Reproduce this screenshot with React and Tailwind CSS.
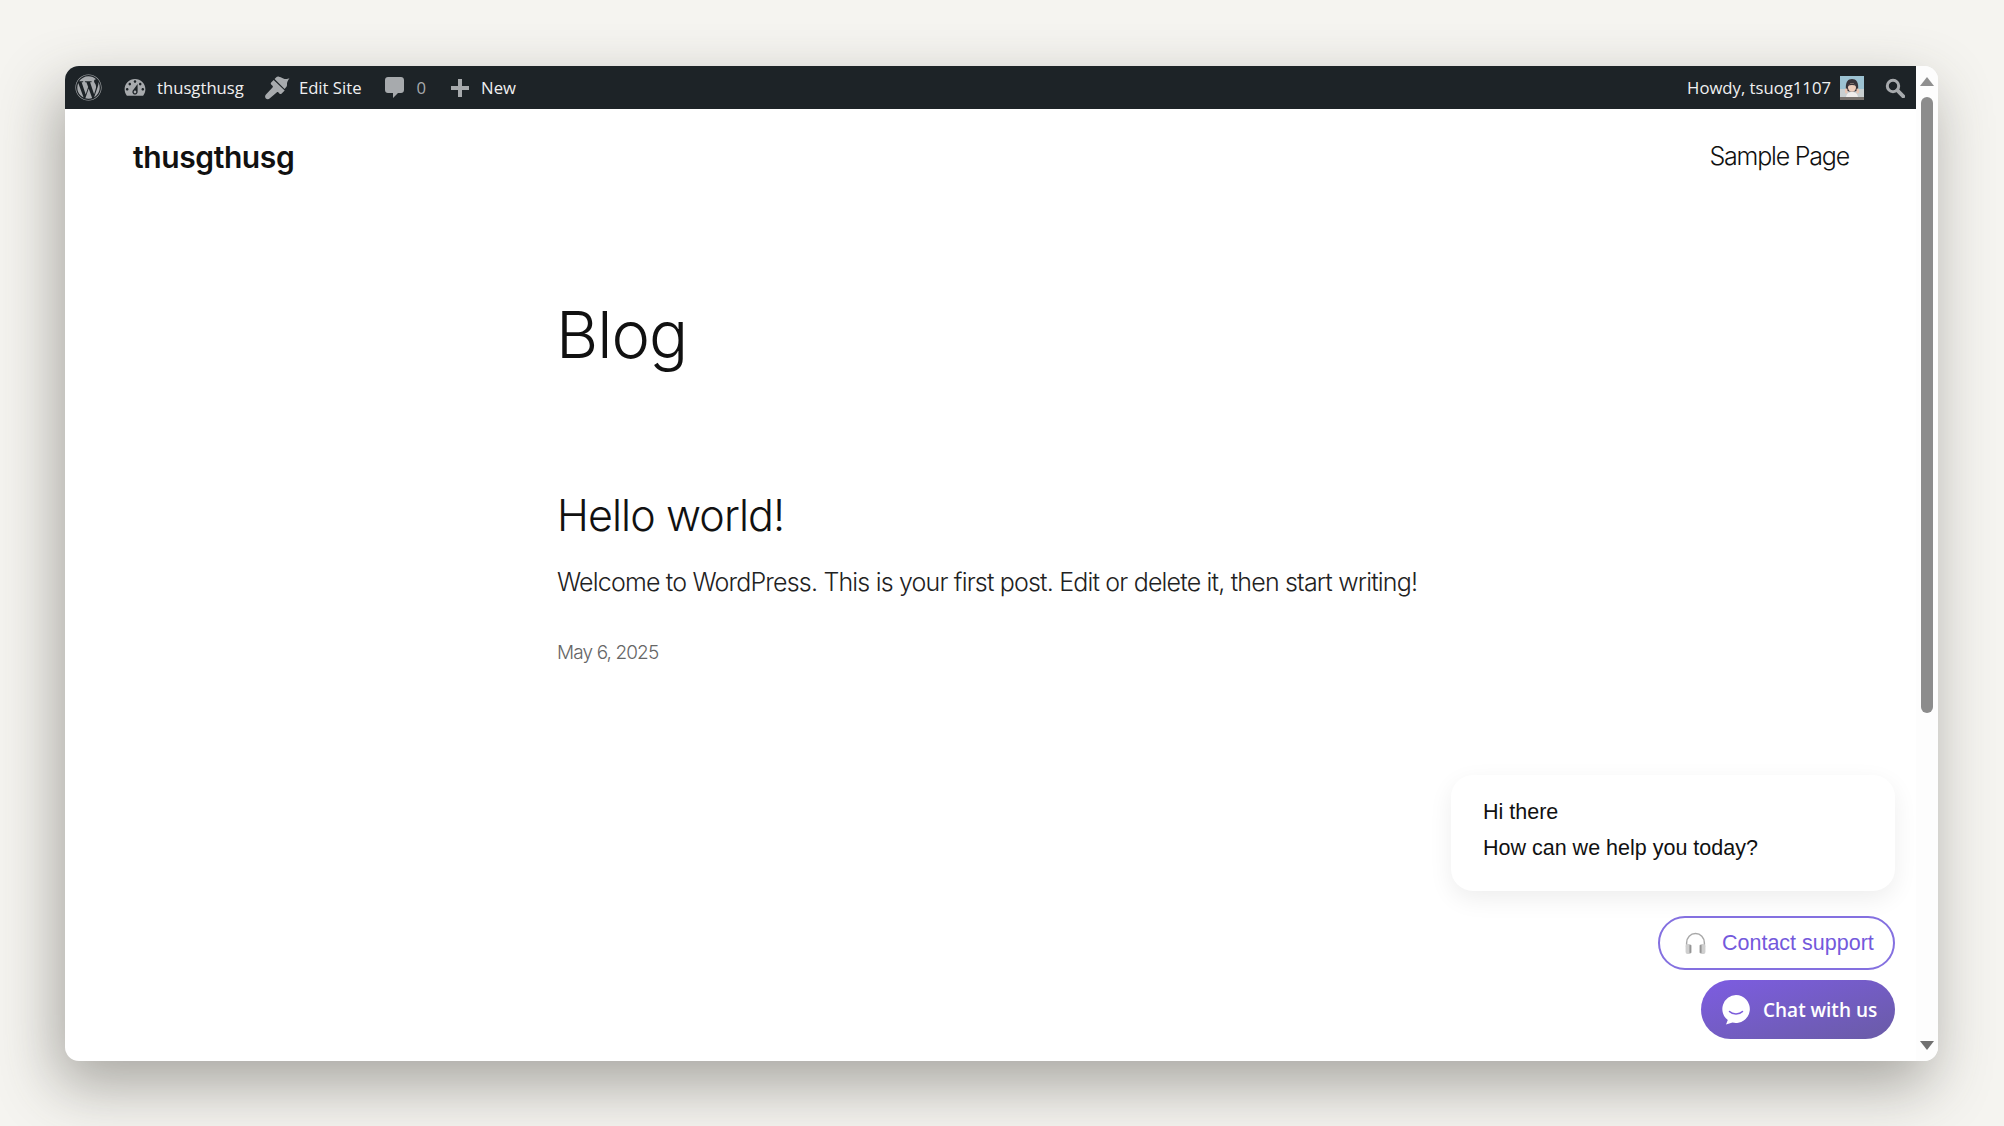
import React from "react";
import { FaWordpress } from "react-icons/fa";

const Dashboard = (p) => (
  <svg viewBox="0 0 20 20" fill="currentColor" {...p}>
    <path d="M3.76 16h12.48c1.1-1.37 1.76-3.11 1.76-5 0-4.42-3.58-8-8-8s-8 3.58-8 8c0 1.89.66 3.63 1.76 5zM10 4c.55 0 1 .45 1 1s-.45 1-1 1-1-.45-1-1 .45-1 1-1zM6 6c.55 0 1 .45 1 1s-.45 1-1 1-1-.45-1-1 .45-1 1-1zm8 0c.55 0 1 .45 1 1s-.45 1-1 1-1-.45-1-1 .45-1 1-1zm-5.37 5.55L12 7v6c0 1.1-.9 2-2 2s-2-.9-2-2c0-.57.24-1.08.63-1.45zM4 10c.55 0 1 .45 1 1s-.45 1-1 1-1-.45-1-1 .45-1 1-1zm12 0c.55 0 1 .45 1 1s-.45 1-1 1-1-.45-1-1 .45-1 1-1zm-5 3c0-.55-.45-1-1-1s-1 .45-1 1 .45 1 1 1 1-.45 1-1z" fillRule="evenodd" />
  </svg>
);
const Brush = (p) => (
  <svg viewBox="0 0 24 24" fill="currentColor" {...p}>
    <path d="M23.5 3.200c-2.600 1.200-4.600.6-6.400-.2-1.500-.7-2.600-1.200-3.700-1.400-1.300-.2-2.200.2-2.800.8L9.200 3.900l9.600 9.500 1.400-1.600c.7-.9 1-1.800.9-3-.1-1.600 1-4 2.400-5.600z" />
    <path d="M8.300 4.800 5.900 7.200c-.5.5-.5 1.300 0 1.800l1.300 1.300c.5.5.5 1.200 0 1.700L.9 18.600c-1.100 1.200-1.100 2.900-.1 3.900 1 1 2.700 1 3.900-.1l6.500-5.600c.5-.5 1.200-.5 1.700 0l1.100 1.100c.5.5 1.300.5 1.800 0l3.100-3z" />
  </svg>
);
const Comment = (p) => (
  <svg viewBox="0 0 19 21" fill="currentColor" {...p}>
    <path d="M3 0h13c1.700 0 3 1.300 3 3v10c0 1.700-1.300 3-3 3h-3l-5 5v-5H3c-1.700 0-3-1.300-3-3V3c0-1.700 1.300-3 3-3z" />
  </svg>
);
const Plus = (p) => (
  <svg viewBox="0 0 18 18" fill="currentColor" {...p}>
    <path d="M7 0h4v7h7v4h-7v7H7v-7H0V7h7z" />
  </svg>
);
const Search = (p) => (
  <svg viewBox="0 0 20 20" fill="none" stroke="currentColor" {...p}>
    <circle cx="8" cy="8" r="5.700" strokeWidth="3" />
    <path d="M12.400 12.400 18.300 18.300" strokeWidth="3.800" strokeLinecap="round" />
  </svg>
);
const Avatar = () => (
  <svg viewBox="0 0 24 24" className="w-[24px] h-[24px] shrink-0">
    <rect width="24" height="24" fill="#9cc2d2" />
    <rect y="13" width="24" height="11" fill="#c9cfd0" />
    <path d="M6 14C5 6 8 3 12 3s7 3 6 11c-1 2-11 2-12 0z" fill="#38343a" />
    <ellipse cx="12" cy="11.500" rx="4" ry="4.300" fill="#edcdbb" />
    <path d="M7.500 10c1-3.500 8-3.500 9 0-3-1.200-6-1.200-9 0z" fill="#38343a" />
    <path d="M6 22c0-4 2.500-6 6-6s6 2 6 6z" fill="#efecea" />
    <rect x="5" y="12.500" width="2.500" height="5" rx="1.200" fill="#e8c6b4" />
    <rect x="16.500" y="12.500" width="2.500" height="5" rx="1.200" fill="#e8c6b4" />
    <rect y="21" width="24" height="3" fill="#77716c" />
  </svg>
);
const Headphones = () => (
  <svg viewBox="0 0 22 22" className="w-[23px] h-[23px] shrink-0">
    <path d="M2.500 14V10.500C2.500 5.200 6.200 1.500 11 1.500s8.500 3.700 8.500 9V14" fill="none" stroke="#a8a8a8" strokeWidth="1.400" />
    <rect x="1.500" y="11.500" width="5.500" height="9.500" rx="1.800" fill="#cfcfcf" />
    <rect x="15" y="11.500" width="5.500" height="9.500" rx="1.800" fill="#cfcfcf" />
    <rect x="5.200" y="12.500" width="1.800" height="7.500" fill="#959595" />
    <rect x="15" y="12.500" width="1.800" height="7.500" fill="#959595" />
  </svg>
);
const ChatBubble = () => (
  <svg viewBox="0 0 28 30" className="w-[28px] h-[30px] shrink-0">
    <path d="M14 0a14 14 0 1 1-3.500 27.600L4 29.500l1.800-4.400A14 14 0 0 1 14 0z" fill="#fff" />
    <path d="M7.500 16.500c3 3.200 10 3.200 13 0" fill="none" stroke="#7c5cdb" strokeWidth="1.500" strokeLinecap="round" />
  </svg>
);

export default function App() {
  return (
    <div className="w-[2004px] h-[1126px] overflow-hidden bg-[#f5f4f0] pt-[66px] pl-[65px]">
      <div className="relative flex w-[1873px] h-[995px] rounded-[14px] bg-white shadow-[-8px_24px_60px_rgba(60,58,50,0.42)] overflow-hidden">
        <div className="flex flex-col flex-1 min-w-0">
          <div className="flex items-center h-[43px] shrink-0 bg-[#1d2327] pl-[10px] pr-[11px] text-[16.7px] text-[#f0f0f1] font-['Open_Sans',sans-serif]">
            <FaWordpress className="w-[27px] h-[27px] text-[#a7aaad]" />
            <Dashboard className="w-[26px] h-[26px] ml-[20px] text-[#a7aaad]" />
            <span className="ml-[9px]">thusgthusg</span>
            <Brush className="w-[25px] h-[25px] ml-[21px] text-[#a7aaad]" />
            <span className="ml-[9px]">Edit Site</span>
            <Comment className="w-[19px] h-[21px] ml-[23px] text-[#a7aaad]" />
            <span className="ml-[13px] text-[#a7aaad]">0</span>
            <Plus className="w-[18px] h-[18px] ml-[25px] text-[#a7aaad]" />
            <span className="ml-[12px]">New</span>
            <span className="ml-auto">Howdy, tsuog1107</span>
            <span className="ml-[9px]"><Avatar /></span>
            <Search className="w-[20px] h-[20px] ml-[21px] text-[#a7aaad]" />
          </div>
          <div className="flex items-center justify-between h-[96px] pl-[68px] pr-[67px] font-['Inter',sans-serif] text-[#111]">
            <span className="text-[30px] font-semibold tracking-[-0.4px]">thusgthusg</span>
            <span className="text-[25px] font-light tracking-[-1.2px]">Sample Page</span>
          </div>
          <main className="pl-[491px] pt-[88px] font-['Inter',sans-serif] text-[#111]">
            <h1 className="text-[65px] leading-[84px] font-light tracking-[-1px]">Blog</h1>
            <h2 className="mt-[109px] pl-[1px] text-[43px] leading-[58px] font-light tracking-[-0.9px]">Hello world!</h2>
            <p className="mt-[20px] pl-[1px] text-[25px] leading-[36px] font-light tracking-[-0.82px] whitespace-nowrap text-[#222]">Welcome to WordPress. This is your first post. Edit or delete it, then start writing!</p>
            <p className="mt-[39px] pl-[1px] text-[19px] leading-[28px] font-light tracking-[-0.88px] text-[#666]">May 6, 2025</p>
          </main>
        </div>
        <div className="relative w-[22px] shrink-0 bg-[#fdfdfd]">
          <div className="mx-auto mt-[11px] w-0 h-0 border-x-[7px] border-x-transparent border-b-[9px] border-b-[#8f8f8f]" />
          <div className="mx-auto mt-[11px] w-[12px] h-[616px] rounded-[6px] bg-[#8c8c8c]" />
          <div className="absolute bottom-[11px] left-[4px] w-0 h-0 border-x-[7px] border-x-transparent border-t-[9px] border-t-[#707070]" />
        </div>
        <div className="absolute right-[43px] bottom-[22px] flex flex-col items-end">
          <div className="w-[444px] h-[116px] rounded-[22px] bg-white shadow-[0_8px_24px_rgba(0,0,0,0.07)] pl-[32px] pt-[19px] font-['Liberation_Sans',sans-serif] text-[21.5px] leading-[36px] text-[#111]">
            <p>Hi there</p>
            <p>How can we help you today?</p>
          </div>
          <div className="mt-[25px] flex items-center w-[237px] h-[54px] rounded-full border-2 border-[#8470e0] bg-white pl-[24px] font-['Liberation_Sans',sans-serif] text-[21.5px] text-[#7459dc]">
            <Headphones />
            <span className="ml-[15px] whitespace-nowrap">Contact support</span>
          </div>
          <div className="mt-[10px] flex items-center w-[194px] h-[59px] rounded-full bg-gradient-to-br from-[#7d5ce2] to-[#6a5ba6] pl-[21px] font-['Open_Sans',sans-serif] text-[19px] font-semibold text-white">
            <ChatBubble />
            <span className="ml-[13px] mt-[1px] whitespace-nowrap">Chat with us</span>
          </div>
        </div>
      </div>
    </div>
  );
}
